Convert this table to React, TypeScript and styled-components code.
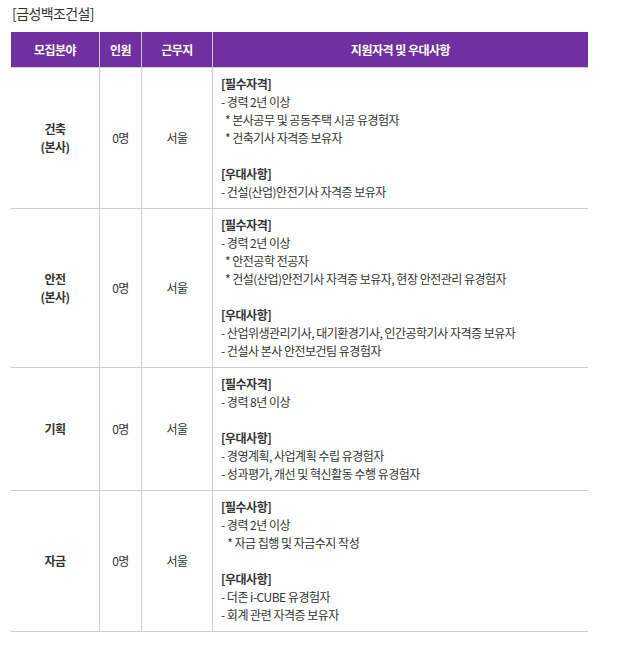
import styled, { createGlobalStyle } from 'styled-components'

const GlobalStyle = createGlobalStyle`
    body {
        margin: 0;
        background: #fff;
        font-family: "Noto Sans CJK KR", "Noto Sans", sans-serif;
        color: #333;
    }
`

const Wrap = styled.div`
    padding: 4px 44px 0 11px;
`

const Title = styled.h3`
    margin: 0 0 9px 1px;
    font-size: 14px;
    font-weight: normal;
    line-height: 19px;
    color: #333;
    letter-spacing: -0.6px;
`

const Table = styled.table`
    width: 577px;
    border-collapse: collapse;
    font-size: 12px;
    letter-spacing: -0.5px;
`

const Th = styled.th<{ $w?: number }>`
    width: ${p => p.$w ? `${p.$w}px` : 'auto'};
    height: 35px;
    padding: 0;
    background: #7030a0;
    color: #fff;
    font-weight: bold;
    text-align: center;
    border-left: 1px solid #d0c4dc;
    border-bottom: 1px solid #ccc;

    &:first-child {
        border-left: none;
    }
`

const Td = styled.td<{ $strong?: boolean }>`
    padding: 0;
    text-align: center;
    vertical-align: middle;
    line-height: 18px;
    border-left: 1px solid #ccc;
    border-bottom: 1px solid #ccc;
    font-weight: ${p => p.$strong ? 'bold' : 'normal'};

    &:first-child {
        border-left: none;
    }
`

const Detail = styled.td`
    padding: 7px 8px 7px;
    text-align: left;
    line-height: 18px;
    border-left: 1px solid #ccc;
    border-bottom: 1px solid #ccc;
`

const Line = styled.div<{ $head?: boolean; $sub?: boolean }>`
    font-weight: ${p => p.$head ? 'bold' : 'normal'};
    padding-left: ${p => p.$sub ? '4px' : '0'};
    height: 18px;
    white-space: pre;
`

type Row = {
    field: string[]
    people: string
    place: string
    lines: string[]
}

const rows: Row[] = [
    {
        field: ['건축', '(본사)'],
        people: '0명',
        place: '서울',
        lines: [
            '[필수자격]',
            '- 경력 2년 이상',
            '* 본사공무 및 공동주택 시공 유경험자',
            '* 건축기사 자격증 보유자',
            '',
            '[우대사항]',
            '- 건설(산업)안전기사 자격증 보유자',
        ],
    },
    {
        field: ['안전', '(본사)'],
        people: '0명',
        place: '서울',
        lines: [
            '[필수자격]',
            '- 경력 2년 이상',
            '* 안전공학 전공자',
            '* 건설(산업)안전기사 자격증 보유자, 현장 안전관리 유경험자',
            '',
            '[우대사항]',
            '- 산업위생관리기사, 대기환경기사, 인간공학기사 자격증 보유자',
            '- 건설사 본사 안전보건팀 유경험자',
        ],
    },
    {
        field: ['기획'],
        people: '0명',
        place: '서울',
        lines: [
            '[필수자격]',
            '- 경력 8년 이상',
            '',
            '[우대사항]',
            '- 경영계획, 사업계획 수립 유경험자',
            '- 성과평가, 개선 및 혁신활동 수행 유경험자',
        ],
    },
    {
        field: ['자금'],
        people: '0명',
        place: '서울',
        lines: [
            '[필수사항]',
            '- 경력 2년 이상',
            ' * 자금 집행 및 자금수지 작성',
            '',
            '[우대사항]',
            '- 더존 i-CUBE 유경험자',
            '- 회계 관련 자격증 보유자',
        ],
    },
]

export default function App() {
    return (
        <>
            <GlobalStyle />
            <Wrap>
                <Title>[금성백조건설]</Title>
                <Table>
                    <thead>
                        <tr>
                            <Th $w={88}>모집분야</Th>
                            <Th $w={41}>인원</Th>
                            <Th $w={70}>근무지</Th>
                            <Th>지원자격 및 우대사항</Th>
                        </tr>
                    </thead>
                    <tbody>
                        {rows.map((r, i) => (
                            <tr key={i}>
                                <Td $strong>
                                    {r.field.map((f, j) => <div key={j}>{f}</div>)}
                                </Td>
                                <Td>{r.people}</Td>
                                <Td>{r.place}</Td>
                                <Detail>
                                    {r.lines.map((l, j) => (
                                        <Line key={j} $head={l.startsWith('[')} $sub={l.trim().startsWith('*')}>
                                            {l}
                                        </Line>
                                    ))}
                                </Detail>
                            </tr>
                        ))}
                    </tbody>
                </Table>
            </Wrap>
        </>
    )
}
